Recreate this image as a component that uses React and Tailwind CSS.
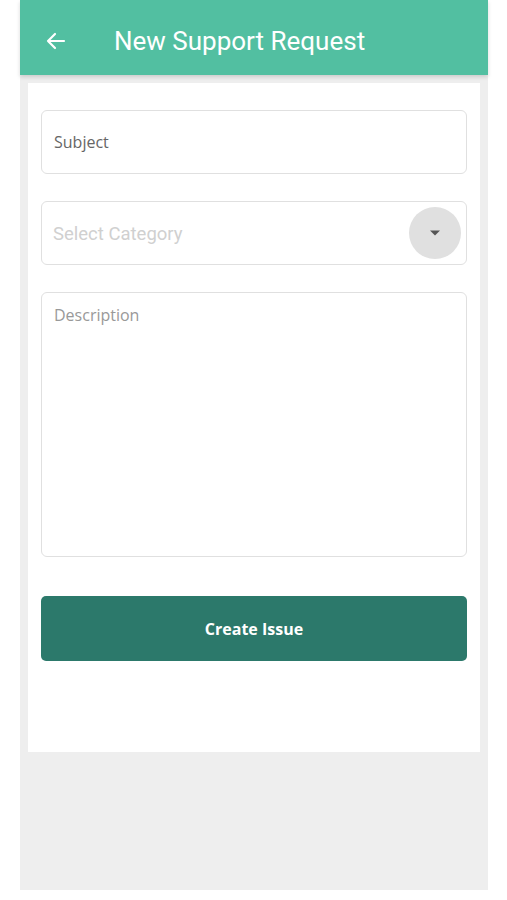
export default function App() {
  return (
    <div className="w-[507px] h-[900px] bg-white">
      <div className="ml-[20px] w-[468px] h-[890px] bg-[#eeeeee] flex flex-col">
        <div className="h-[75px] bg-[#52bfa1] flex items-center pt-[6px] shadow-[0_2px_4px_rgba(0,0,0,0.15)] relative z-10">
          <svg width="24" height="24" viewBox="0 0 24 24" className="ml-[24px]" fill="none" stroke="white" strokeWidth="2.2" strokeLinecap="round" strokeLinejoin="round">
            <path d="M20 12H4M11 5l-7 7 7 7" />
          </svg>
          <div className="ml-[46px] text-white text-[26px] leading-none" style={{ fontFamily: 'Roboto, sans-serif' }}>
            New Support Request
          </div>
        </div>
        <div className="mx-[8px] mt-[8px] h-[669px] bg-white px-[13px] pt-[27px] flex flex-col">
          <div className="h-[64px] border border-[#e0e0e0] rounded-[6px] flex items-center px-[12px]">
            <span className="text-[16px] text-[#666666]" style={{ fontFamily: '"Open Sans", sans-serif' }}>Subject</span>
          </div>
          <div className="mt-[27px] h-[64px] border border-[#e0e0e0] rounded-[6px] flex items-center pl-[11px] pr-[5px]">
            <span className="flex-1 text-[18.5px] text-[#d0d0d0] pt-[3px]" style={{ fontFamily: 'Roboto, sans-serif' }}>Select Category</span>
            <div className="w-[52px] h-[52px] rounded-full bg-[#e0e0e0] flex items-center justify-center">
              <svg width="12" height="8" viewBox="0 0 12 8">
                <path d="M1 1.5h10L6 6.5z" fill="#555555" />
              </svg>
            </div>
          </div>
          <div className="mt-[27px] h-[265px] border border-[#e0e0e0] rounded-[6px] px-[12px] pt-[10px]">
            <span className="text-[16px] text-[#999999]" style={{ fontFamily: '"Open Sans", sans-serif' }}>Description</span>
          </div>
          <div className="mt-[39px] h-[65px] bg-[#2c796b] rounded-[5px] flex items-center justify-center">
            <span className="text-white text-[16px] font-bold" style={{ fontFamily: '"Open Sans", sans-serif' }}>Create Issue</span>
          </div>
        </div>
      </div>
    </div>
  );
}
